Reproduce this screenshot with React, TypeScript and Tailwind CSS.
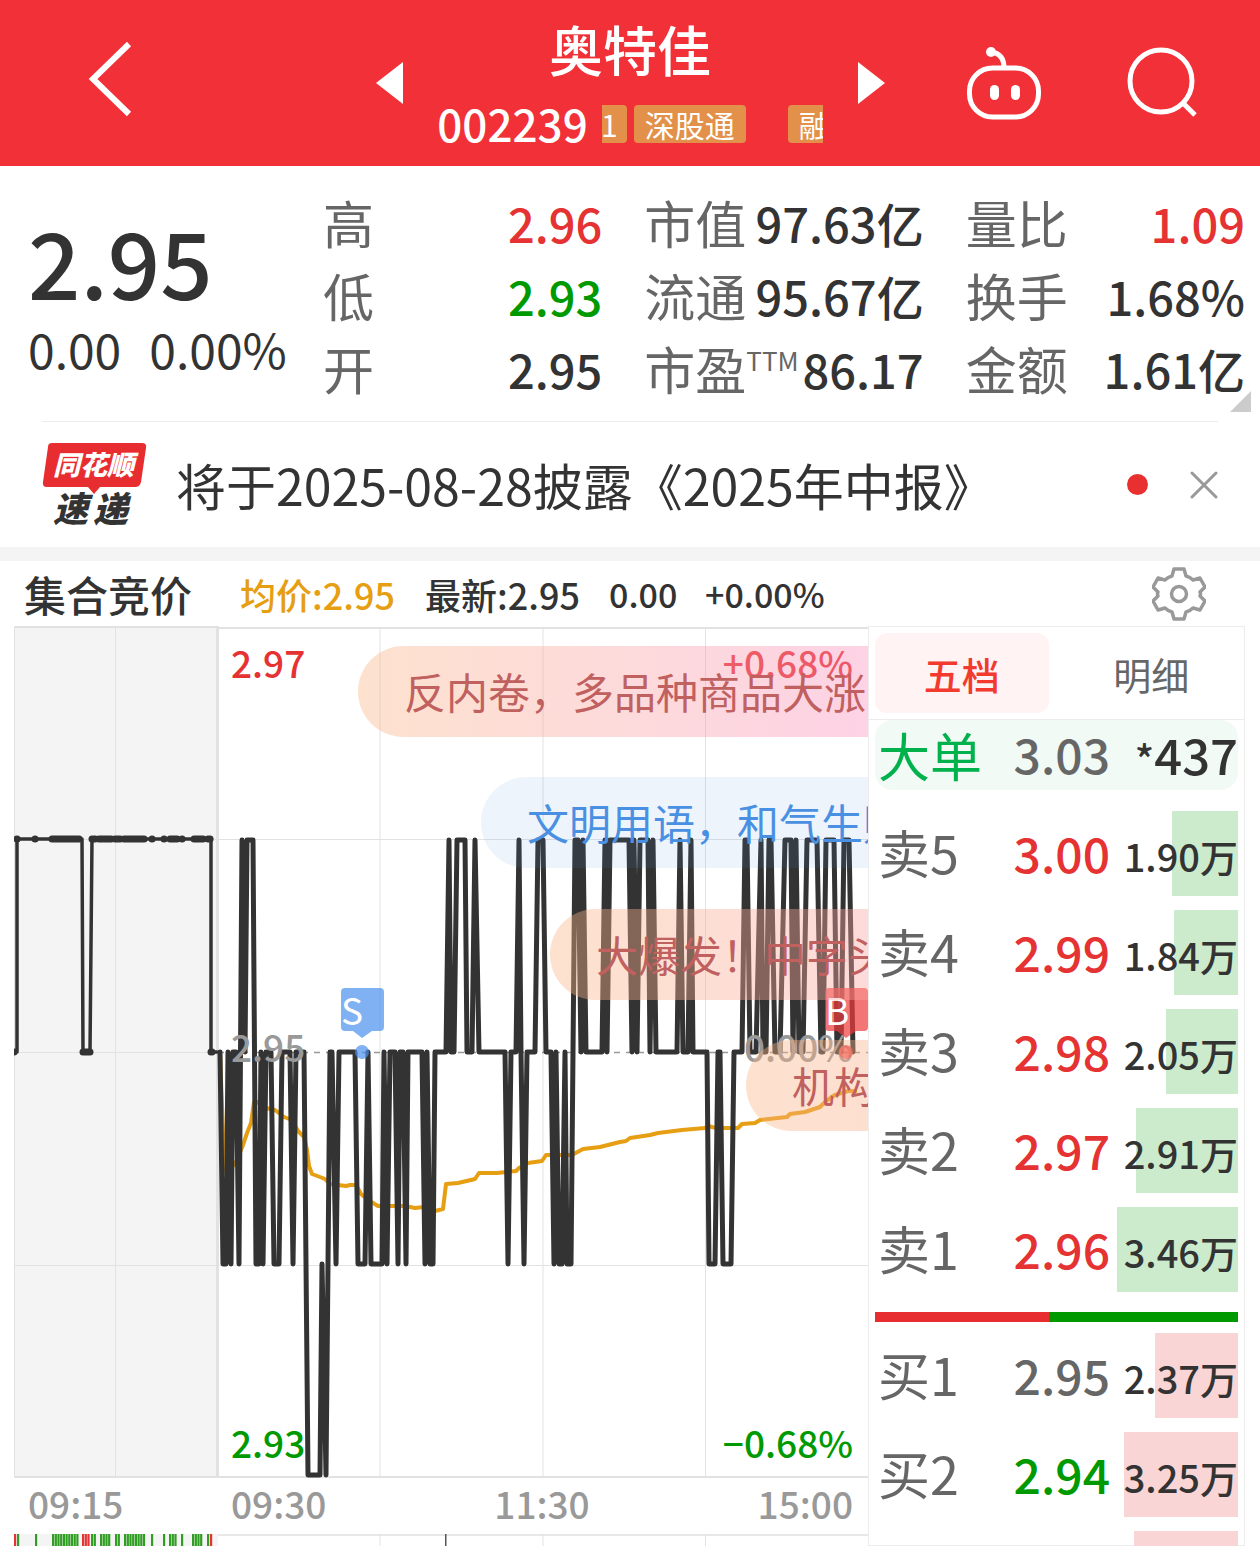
type Stat = { label: string; sup?: string; value: string; color?: string };
type Level = { side: string; price: string; color: string; volume: number };

const statColumns: Stat[][] = [
  [
    { label: '高', value: '2.96', color: 'text-[#e53232]' },
    { label: '低', value: '2.93', color: 'text-[#009900]' },
    { label: '开', value: '2.95' },
  ],
  [
    { label: '市值', value: '97.63亿' },
    { label: '流通', value: '95.67亿' },
    { label: '市盈', sup: 'TTM', value: '86.17' },
  ],
  [
    { label: '量比', value: '1.09', color: 'text-[#e53232]' },
    { label: '换手', value: '1.68%' },
    { label: '金额', value: '1.61亿' },
  ],
];

const sells: Level[] = [
  { side: '卖5', price: '3.00', color: 'text-[#e53232]', volume: 1.9 },
  { side: '卖4', price: '2.99', color: 'text-[#e53232]', volume: 1.84 },
  { side: '卖3', price: '2.98', color: 'text-[#e53232]', volume: 2.05 },
  { side: '卖2', price: '2.97', color: 'text-[#e53232]', volume: 2.91 },
  { side: '卖1', price: '2.96', color: 'text-[#e53232]', volume: 3.46 },
];

const buys: Level[] = [
  { side: '买1', price: '2.95', color: 'text-[#666]', volume: 2.37 },
  { side: '买2', price: '2.94', color: 'text-[#009900]', volume: 3.25 },
  { side: '买3', price: '2.93', color: 'text-[#009900]', volume: 2.97 },
];

// h = 2.96, m = 2.95, l = 2.94, b = 2.93
const levelY: Record<string, number> = { h: 214, m: 426, l: 638, b: 849 };

const priceData =
  '206m 209l 212l 214m 217l 219m 222m 225l 228h 231m 233h 239h 242l 245l 247m 249l 252m 257m 260l 265l 268m 276m 279l 282m 290m ' +
  '294b 306b 308l 312b 316m 318m 322l 325m 341m 344l 351l 354m 357l 368l 370m 373l 376m 381m 384l 386m 389m 392l 394m 408m 411l 413m 416l 419l ' +
  '421m 432m 435h 437m 440m 443h 451h 453m 458m 461h 465m 491m 494l 497m 502m 505h 507m 510l 513m 521m 524h 529h 532m 537m 540l 542m ' +
  '545l 548l 551m 553l 557l 559m 561h 564h 567m 569h 572m 588m 591h 593m 596h 615h 618m 620h 623m 626h 634h 636m 639h 642m 663m ' +
  '666h 669m 674m 677h 679m 693m 695l 701l 704m 706m 709l 717l 720m 728m 731h 733h 736m 742m 747h 749m 752m 755h 757h 761m 766m ' +
  '771h 777h 779m 782h 785m 789m 793h 803h 807m 809m 812h 820h 823m 827m 830h 835h 839m';

const pricePoints = priceData
  .split(' ')
  .map((p) => `${p.slice(0, -1)},${levelY[p.slice(-1)]}`)
  .join(' ');

const averagePoints =
  '206,426 210,534 212,546 220,539 223,534 229,519 233,507 237,497 240,476 243,476 252,482 261,484 270,491 278,494 284,505 290,511 293,524 ' +
  '295,540 298,548 306,551 311,553 316,558 332,560 336,559 342,559 347,568 354,574 364,580 391,580 401,582 410,581 421,585 429,583 432,558 ' +
  '444,557 461,553 465,547 483,547 502,545 505,542 514,537 528,535 532,529 558,529 569,523 586,521 606,516 612,515 616,512 636,509 644,507 ' +
  '668,504 691,502 694,500 702,502 724,502 728,498 741,497 746,494 773,491 776,488 791,486 806,481 812,475 821,469 834,465 843,465';

// runs of auction quotes, as [from, to]
const auctionRuns = [
  [3, 3], [21, 21], [38, 65], [78, 81], [85, 97], [101, 106], [110, 130],
  [138, 138], [150, 150], [156, 163], [168, 168], [180, 189], [194, 196],
];

const auctionBars = [
  [0, 1, 'r'], [3, 1, 'g'], [21, 1, 'g'], [38, 10, 'g'], [68, 3, 'r'], [77, 2, 'g'], [86, 4, 'g'], [101, 2, 'g'],
  [110, 8, 'g'], [137, 1, 'g'], [149, 1, 'g'], [155, 3, 'g'], [167, 1, 'g'], [178, 4, 'g'], [193, 1, 'g'], [196, 1, 'r'],
] as const;

const comments = [
  {
    text: '反内卷，多品种商品大涨',
    style: 'left-[344px] top-[20px] bg-linear-to-r from-[#fab585]/40 to-[#fa8cc1]/40 text-[#c0605f]',
  },
  { text: '文明用语，和气生财', style: 'left-[467px] top-[151px] bg-[#4a90e2]/10 text-[#4a90e2]' },
  {
    text: '大爆发！中字头',
    style: 'left-[536px] top-[283px] bg-linear-to-r from-[#fab585]/40 to-[#faa0a5]/40 text-[#c0605f]',
  },
  {
    text: '机构',
    style: 'left-[732px] top-[414px] bg-linear-to-r from-[#fab585]/40 to-[#faa595]/40 text-[#c0605f]',
  },
];

const Header = () => (
  <header className="grid grid-cols-[1fr_auto_1fr] items-center h-[166px] shrink-0 bg-[#f23037] text-white">
    <div className="pl-[88px] pb-2">
      <button aria-label="返回" className="block">
        <svg width="46" height="78" viewBox="0 0 46 78" fill="none">
          <path d="M41 4 5 39l36 35" stroke="#fff" strokeWidth="6" />
        </svg>
      </button>
    </div>
    <div className="flex items-center">
      <button aria-label="上一只">
        <svg width="27" height="42" viewBox="0 0 27 42">
          <path d="M27 0v42L0 21z" fill="#fff" />
        </svg>
      </button>
      <div className="flex flex-col items-center w-[455px] pt-[6px]">
        <h1 className="text-[54px] leading-[74px] font-medium">奥特佳</h1>
        <div className="flex items-center gap-[14px] h-[74px]">
          <span className="text-[44px] leading-none font-medium">002239</span>
          <div className="flex gap-[7px] w-[221px] pt-[2px] overflow-hidden text-[30px] leading-[38px]">
            <span className="flex justify-end w-[25px] shrink-0 pr-[9px] rounded-r-sm bg-[#e2904a]">1</span>
            <span className="px-[11px] shrink-0 rounded-sm bg-[#e2904a]">深股通</span>
            <span className="ml-[35px] px-[11px] shrink-0 rounded-sm bg-[#e2904a]">融</span>
          </div>
        </div>
      </div>
      <button aria-label="下一只">
        <svg width="27" height="42" viewBox="0 0 27 42">
          <path d="M0 0v42l27-21z" fill="#fff" />
        </svg>
      </button>
    </div>
    <div className="flex justify-end items-center gap-[84px] pr-[62px] pb-[2px]">
      <button aria-label="智能助手">
        <svg width="76" height="76" viewBox="0 0 76 76" fill="none" stroke="#fff" strokeWidth="5">
          <rect x="3.500" y="24" width="69" height="49" rx="23" />
          <path d="M38 24c0-9-4-15-13-16" />
          <circle cx="25" cy="8" r="5" fill="#fff" stroke="none" />
          <rect x="24" y="41" width="9" height="15" rx="4.500" fill="#fff" stroke="none" />
          <rect x="45" y="41" width="9" height="15" rx="4.500" fill="#fff" stroke="none" />
        </svg>
      </button>
      <button aria-label="搜索">
        <svg width="72" height="72" viewBox="0 0 72 72" fill="none" stroke="#fff" strokeWidth="5">
          <circle cx="35" cy="35" r="31" />
          <path d="m57 57 12 12" />
        </svg>
      </button>
    </div>
  </header>
);

const Quote = () => (
  <section className="relative flex pt-[20px] pb-[16px] pr-[15px] text-[#333]">
    <div className="w-[323px] shrink-0 pl-[28px] pt-[22px] whitespace-nowrap">
      <div className="text-[92px] leading-[104px] font-medium">2.95</div>
      <div className="flex gap-[28px] text-[48px] leading-[72px]">
        <span>0.00</span>
        <span>0.00%</span>
      </div>
    </div>
    <div className="grid grid-cols-3 gap-[42px] flex-1">
      {statColumns.map((column, i) => (
        <dl key={i}>
          {column.map(({ label, sup, value, color }) => (
            <div key={label} className="flex justify-between leading-[73px] whitespace-nowrap">
              <dt className="flex text-[51px] text-[#666]">
                {label}
                {sup && <sup className="top-0 text-[26px] leading-[56px]">{sup}</sup>}
              </dt>
              <dd className={`text-[47px] font-medium ${color ?? ''}`}>{value}</dd>
            </div>
          ))}
        </dl>
      ))}
    </div>
    <svg className="absolute right-[9px] bottom-[9px]" width="21" height="21" viewBox="0 0 21 21">
      <path d="M21 0v21H0z" fill="#ccc" />
    </svg>
  </section>
);

const News = () => (
  <section className="flex items-center h-[126px] mx-[42px] shrink-0 border-t border-[#ececec]">
    <svg width="106" height="86" viewBox="0 0 106 86" fontWeight="900" fontStyle="italic">
      <path
        d="M10 1h90q5 0 4 5l-5 34q-1 5-6 5H58l-6 7-6-7H5q-5 0-4-5L6 5q0-4 4-4z"
        fill="#e82d31"
      />
      <text x="11" y="33" fontSize="27" fill="#fff">同花顺</text>
      <text x="11" y="80" fontSize="35" fill="#333">速</text>
      <text x="51" y="80" fontSize="35" fill="#333">递</text>
    </svg>
    <a href="#news" className="flex-1 pl-[28px] text-[50px] text-[#333] whitespace-nowrap">
      将于2025-08-28披露《2025年中报》
    </a>
    <span className="w-[21px] h-[21px] mr-[42px] rounded-full bg-[#e93030]" />
    <button aria-label="关闭">
      <svg width="28" height="28" viewBox="0 0 28 28" stroke="#999" strokeWidth="3" strokeLinecap="round">
        <path d="m2 2 24 24M26 2 2 26" />
      </svg>
    </button>
  </section>
);

const ChartHeader = () => (
  <div className="flex items-center h-[65px] shrink-0 pl-[24px] pr-[54px] text-[36px] font-medium text-[#333] whitespace-nowrap">
    <h2 className="w-[216px] text-[42px]">集合竞价</h2>
    <span className="w-[185px] text-[#e69e12]">均价:2.95</span>
    <span className="w-[184px]">最新:2.95</span>
    <span className="w-[96px] text-[34px]">0.00</span>
    <span className="flex-1 text-[34px]">+0.00%</span>
    <button aria-label="设置">
      <svg width="54" height="54" viewBox="0 0 54 54" fill="none" stroke="#999" strokeWidth="3.500" strokeLinejoin="round">
        <path d="M22 2h10l2 7q4 1 7 4l7-2 5 9-5 5q1 2 0 4l5 5-5 9-7-2q-3 3-7 4l-2 7H22l-2-7q-4-1-7-4l-7 2-5-9 5-5q-1-2 0-4l-5-5 5-9 7 2q3-3 7-4z" />
        <circle cx="27" cy="27" r="7.500" />
      </svg>
    </button>
  </div>
);

const PriceChart = () => (
  <div className="relative h-[852px] overflow-hidden text-[37px] leading-none font-medium">
    <svg className="block w-full h-full" viewBox="0 0 854 852" preserveAspectRatio="none" fill="none">
      <rect x="0" y="0" width="204" height="851" fill="#f4f4f4" />
      <g stroke="#e2e2e2">
        <path d="M.5 0v851M101.500 0v851M366 2v849M529 2v849M691.500 2v849M0 213.500h855M0 426.500h204M0 639.500h855" />
        <path d="M0 1h204M204 2h651M0 851h855" strokeWidth="2" />
        <path d="M203.500 0v851" strokeWidth="3" />
      </g>
      <path d="M204 426.500h651" stroke="#999" strokeWidth="1.500" strokeDasharray="6 6" />
      <polyline points={averagePoints} stroke="#e69e12" strokeWidth="4" strokeLinejoin="round" />
      <g stroke="#333" strokeLinejoin="round" strokeLinecap="round">
        <path d="M0 426h3V213h65l1 213h7l2-213h119v213h6" strokeWidth="3.500" />
        {auctionRuns.map(([from, to]) => (
          <path key={from} d={`M${from} 213h${to - from + 0.1}`} strokeWidth="7" />
        ))}
        <path d="M0 426h.1M69 426h7M197 426h1" strokeWidth="7" />
        <polyline points={pricePoints} strokeWidth="5" />
      </g>
    </svg>
    <span className="absolute left-[217px] top-[18px] text-[#e53232]">2.97</span>
    <span className="absolute left-[217px] top-[402px] text-[#999]">2.95</span>
    <span className="absolute left-[217px] top-[798px] text-[#009900]">2.93</span>
    <span className="absolute right-[15px] top-[18px] text-[#e53232]">+0.68%</span>
    <span className="absolute right-[15px] top-[402px] text-[#999]">0.00%</span>
    <span className="absolute right-[15px] top-[798px] text-[#009900]">−0.68%</span>
    <Marker text="S" place="left-[327px]" color="text-[#4a90ee]/70" />
    <Marker text="B" place="left-[811px]" color="text-[#ee3b3b]/70" />
    {comments.map(({ text, style }) => (
      <div
        key={text}
        className={`absolute h-[91px] min-w-[340px] px-[46px] rounded-full text-[42px] leading-[90px] font-normal whitespace-nowrap ${style}`}
      >
        {text}
      </div>
    ))}
  </div>
);

const Marker = ({ text, place, color }: { text: string; place: string; color: string }) => (
  <div className={`absolute top-[362px] w-[43px] h-[72px] ${place} ${color}`}>
    <svg className="absolute inset-0" width="43" height="72" viewBox="0 0 43 72" fill="currentColor">
      <path d="M4 0h35q4 0 4 4v35q0 4-4 4h-8l-10 7-9-7H4q-4 0-4-4V4q0-4 4-4z" />
      <circle cx="21" cy="64" r="7" />
    </svg>
    <span className="relative text-[37px] leading-[42px] font-normal text-white">{text}</span>
  </div>
);

const TimeAxis = () => (
  <div className="flex h-[56px] items-center pb-1 text-[37px] font-medium text-[#999]">
    <span className="w-[203px] pl-[14px]">09:15</span>
    <div className="grid grid-cols-3 flex-1 pl-[14px] pr-[15px]">
      <span>09:30</span>
      <span className="text-center">11:30</span>
      <span className="text-right">15:00</span>
    </div>
  </div>
);

const VolumeChart = () => (
  <svg className="block w-full h-[12px]" viewBox="0 0 854 12" preserveAspectRatio="none">
    <path d="M0 1h855" stroke="#e8e8e8" strokeWidth="2" />
    <path d="M366 0v12M529 0v12M691.500 0v12" stroke="#e2e2e2" />
    <rect width="204" height="12" fill="#f4f4f4" />
    {auctionBars.flatMap(([x, count, kind]) =>
      Array.from({ length: count }, (_, i) => (
        <rect
          key={`${x}-${i}`}
          x={x + i * 2.7}
          width="2.200"
          height="12"
          fill={kind === 'r' ? '#e53232' : '#2f9e22'}
        />
      ))
    )}
    <rect x="431" width="1.500" height="12" fill="#555" />
  </svg>
);

const Levels = ({ name, levels, bar }: { name: string; levels: Level[]; bar: string }) => (
  <table className="w-full table-fixed" aria-label={name}>
    <tbody>
      {levels.map(({ side, price, color, volume }) => (
        <tr key={side} className="h-[99px] leading-none whitespace-nowrap">
          <th className="w-[132px] p-0 pl-[3px] pb-1 text-left text-[52px] font-normal text-[#666]">{side}</th>
          <td className={`w-[103px] p-0 pb-1 text-right text-[48px] font-medium ${color}`}>{price}</td>
          <td className="relative p-0 pt-1 text-right text-[38px] font-medium text-[#333]">
            <div className={`absolute right-0 top-[7px] h-[85px] ${bar}`} style={{ width: volume * 35 }} />
            <span className="relative">{volume.toFixed(2)}万</span>
          </td>
        </tr>
      ))}
    </tbody>
  </table>
);

const OrderBook = () => (
  <aside className="w-[377px] shrink-0 border border-[#ececec]">
    <div className="grid grid-cols-2 p-[6px] h-[92px] text-[38px]" role="tablist">
      <button role="tab" aria-selected="true" className="mr-2 rounded-xl bg-[#fff3f3] font-medium text-[#f23a2f]">
        五档
      </button>
      <button role="tab" aria-selected="false" className="ml-2 text-[#666]">
        明细
      </button>
    </div>
    <div className="px-[6px] border-t border-[#ececec]">
      <div className="flex items-center h-[70px] mb-[14px] pl-[3px] rounded-[18px] bg-[#f1faf5] leading-none whitespace-nowrap">
        <span className="w-[129px] text-[52px] text-[#00b14c]">大单</span>
        <span className="w-[103px] pb-1 text-right text-[48px] font-medium text-[#666]">3.03</span>
        <span className="flex flex-1 items-end justify-end pb-1 text-[49px] font-medium text-[#333]">
          <span className="text-[40px]">*</span>437
        </span>
      </div>
      <Levels name="卖盘" levels={sells} bar="bg-[#ccebcc]" />
      <div className="flex h-[10px] mt-[13px] mb-[4px]">
        <div className="w-[48%] bg-[#e82d31]" />
        <div className="flex-1 bg-[#009900]" />
      </div>
      <Levels name="买盘" levels={buys} bar="bg-[#fad5d5]" />
    </div>
  </aside>
);

export default function App() {
  return (
    <div className="flex flex-col h-screen overflow-hidden bg-white font-['Noto_Sans_CJK_SC',sans-serif]">
      <Header />
      <Quote />
      <News />
      <div className="h-[14px] shrink-0 bg-[#f4f4f4]" />
      <ChartHeader />
      <main className="flex flex-1 min-h-0 pl-[14px] pr-[15px]">
        <div className="flex-1 min-w-0">
          <PriceChart />
          <TimeAxis />
          <VolumeChart />
        </div>
        <OrderBook />
      </main>
    </div>
  );
}
